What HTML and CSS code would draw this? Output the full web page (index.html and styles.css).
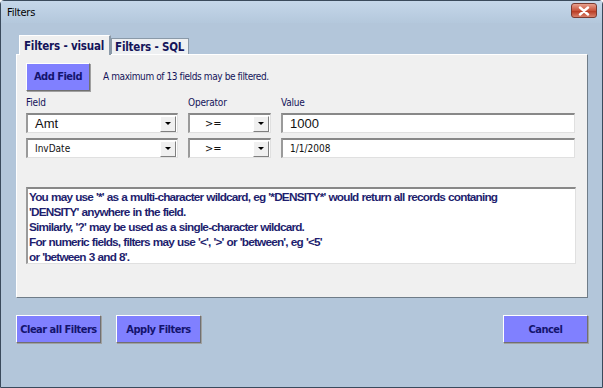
FILE: index.html
```html
<!DOCTYPE html>
<html>
<head>
<meta charset="utf-8">
<link rel="stylesheet" href="styles.css">
</head>
<body>
<div class="window">
  <div class="titlebar">
    <span class="title">Filters</span>
    <span class="close"><svg width="14" height="10" viewBox="0 0 14 10"><path d="M3 1.5 L11 8.5 M11 1.5 L3 8.5" stroke="#fff" stroke-width="2.4" stroke-linecap="round"/></svg></span>
  </div>
  <div class="body">
    <div class="tabs">
      <div class="tab active">Filters - visual</div>
      <div class="tab">Filters - SQL</div>
    </div>
    <div class="page">
      <div class="toprow">
        <div class="btn addbtn">Add Field</div>
        <span class="note">A maximum of 13 fields may be filtered.</span>
      </div>
      <div class="grid">
        <div class="lbl">Field</div>
        <div class="lbl">Operator</div>
        <div class="lbl">Value</div>
        <div class="combo big"><span class="val">Amt</span><span class="drop"><i></i></span></div>
        <div class="combo op"><span class="val">&gt;=</span><span class="drop"><i></i></span></div>
        <div class="input big"><span class="val">1000</span></div>
        <div class="combo"><span class="val">InvDate</span><span class="drop"><i></i></span></div>
        <div class="combo op"><span class="val">&gt;=</span><span class="drop"><i></i></span></div>
        <div class="input"><span class="val">1/1/2008</span></div>
      </div>
      <div class="help">You may use '*' as a multi-character wildcard, eg '*DENSITY*' would return all records contaning<br>'DENSITY' anywhere in the field.<br>Similarly, '?' may be used as a single-character wildcard.<br>For numeric fields, filters may use '&lt;', '&gt;' or 'between', eg '&lt;5'<br>or 'between 3 and 8'.</div>
    </div>
    <div class="buttons">
      <div class="btn">Clear all Filters</div>
      <div class="btn">Apply Filters</div>
      <div class="spacer"></div>
      <div class="btn">Cancel</div>
    </div>
  </div>
</div>
</body>
</html>
```
FILE: styles.css
```css
html, body { margin: 0; padding: 0; }
body { width: 603px; height: 388px; overflow: hidden; font-family: "DejaVu Sans Condensed", "DejaVu Sans", sans-serif; font-stretch: condensed; }
.window {
  width: 603px; height: 388px; box-sizing: border-box;
  border: 1px solid #3a4a5c; border-radius: 4px 4px 0 0;
  background: #b3c6da; display: flex; flex-direction: column;
}
.titlebar {
  height: 22px; display: flex; align-items: center; justify-content: space-between;
  padding: 0 5px 0 6px;
  background: linear-gradient(#c5d7ea, #b4c8dc);
}
.title { font-size: 11px; color: #000; letter-spacing: -0.2px; }
.close {
  width: 26px; height: 15px; box-sizing: border-box; border-radius: 3px;
  background: linear-gradient(#e8a08e, #c9543c 50%, #b83a22 55%, #d9806a);
  border: 1px solid #7a3a30; display: flex; align-items: center; justify-content: center; margin-top: -3px;
}
.body { flex: 1; padding: 12px 14px 0 15px; display: flex; flex-direction: column; }
.tabs { display: flex; align-items: flex-end; height: 19px; padding-left: 3px; }
.tab {
  font-weight: bold; font-size: 11.5px; color: #14145a; letter-spacing: -0.2px;
  background: #eef0f2; border: 1px solid #8a99a8; border-bottom: none;
  height: 16px; padding: 0 4px 0 3px; display: flex; align-items: center; box-sizing: border-box;
  white-space: nowrap;
}
.tab.active { height: 20px; background: #f0f0f0; border-color: #fff #8a99a8 #fff #fff; border-width: 1px 2px 0 1px; position: relative; top: 1px; padding: 0 5px 0 4px; }
.page {
  height: 244px; box-sizing: border-box; background: #f0f0f0;
  border: 1px solid #fff; border-right-color: #6f7c88; border-bottom-color: #6f7c88;
  padding: 7px 12px 0 9px;
}
.toprow { display: flex; align-items: center; gap: 13px; height: 29px; }
.btn {
  background: #8080ff; color: #14146e; font-weight: bold; font-size: 11px; letter-spacing: -0.5px;
  border: 1px solid; border-color: #fff #707070 #707070 #fff;
  box-shadow: 1px 1px 0 #a0a0a0; white-space: nowrap;
  display: flex; align-items: center; justify-content: center; box-sizing: border-box;
}
.addbtn { width: 64px; height: 28px; }
.note { font-size: 10px; color: #14145a; letter-spacing: -0.4px; }
.grid {
  display: grid; grid-template-columns: 152px 83px 294px; column-gap: 10px;
  grid-template-rows: 11px 20px 20px; row-gap: 5px; margin-top: 6px;
}
.lbl { font-size: 10px; color: #14145a; line-height: 11px; letter-spacing: -0.2px; }
.combo, .input {
  background: #fff; box-sizing: border-box; height: 20px;
  border: 1px solid; border-color: #888 #e0e0e0 #e0e0e0 #888;
  border-top: 2px solid #888; border-left: 2px solid #9a9a9a;
  display: flex; align-items: center;
}
.val { flex: 1; padding-left: 7px; font-size: 10px; color: #111; }
.big .val { font-family: "Liberation Sans", Arial, sans-serif; font-stretch: normal; font-size: 13px; }
.op .val { padding-left: 15px; font-size: 11px; }
.input .val { padding-left: 7px; }
.drop {
  width: 16px; height: 16px; box-sizing: border-box; margin-right: 1px;
  background: #f0f0f0; border: 1px solid; border-color: #fff #808080 #808080 #fff;
  display: flex; align-items: center; justify-content: center;
}
.drop i { width: 0; height: 0; border-left: 3px solid transparent; border-right: 3px solid transparent; border-top: 3px solid #000; }
.help {
  margin-top: 29px; height: 77px; width: 550px; box-sizing: border-box; background: #fff;
  border-top: 2px solid #888; border-left: 2px solid #9a9a9a; border-right: 1px solid #e0e0e0; border-bottom: 1px solid #e0e0e0;
  padding: 1px 0 0 1px; white-space: nowrap; overflow: hidden;
  font-family: "Liberation Sans", Arial, sans-serif; font-stretch: normal; font-weight: bold; font-size: 11.8px; line-height: 15px; color: #1e1e6e;
  letter-spacing: -0.8px; word-spacing: 0.5px;
}
.buttons { display: flex; gap: 15px; margin-top: 17px; }
.buttons .btn { width: 85px; height: 28px; }
.spacer { flex: 1; }
```
